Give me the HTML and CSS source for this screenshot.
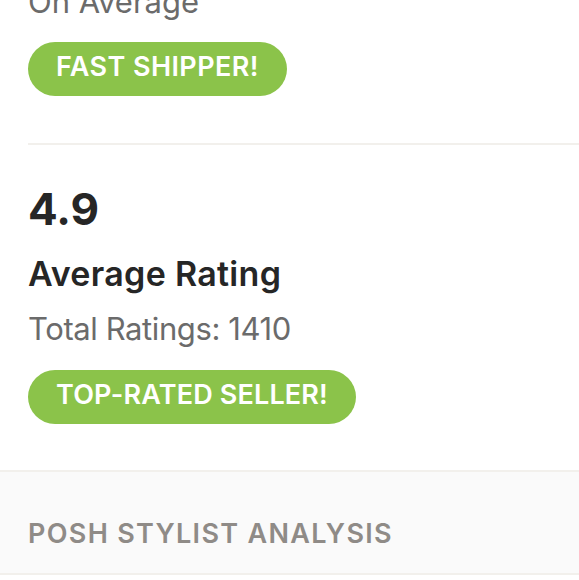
FILE: index.html
```html
<!DOCTYPE html>
<html>
<head>
<meta charset="utf-8">
<link rel="stylesheet" href="styles.css">
</head>
<body>
<div class="stat stat-first">
  <div class="caption caption-avg">On Average</div>
  <div class="badge">FAST SHIPPER!</div>
</div>
<div class="stat stat-second">
  <div class="value">4.9</div>
  <div class="label">Average Rating</div>
  <div class="caption caption-total">Total Ratings: 1410</div>
  <div class="badge badge-top">TOP-RATED SELLER!</div>
</div>
<div class="section-head">
  <div class="section-title">POSH STYLIST ANALYSIS</div>
</div>
</body>
</html>
```

FILE: styles.css
```css
html, body {
  margin: 0;
  padding: 0;
  background: #ffffff;
  overflow: hidden;
}
body {
  font-family: "Inter", "Liberation Sans", sans-serif;
  width: 579px;
  height: 580px;
}
.stat {
  display: flex;
  flex-direction: column;
  align-items: flex-start;
}
.stat-first {
  margin-left: 28px;
  padding-bottom: 47px;
  border-bottom: 2px solid #f2f0ec;
}
.caption {
  font-size: 31px;
  line-height: 38px;
  color: #6b6b6b;
}
.caption-avg {
  margin-top: -17px;
}
.badge {
  height: 54px;
  box-sizing: border-box;
  border-radius: 27px;
  background: #8bc34a;
  color: #ffffff;
  font-weight: 600;
  font-size: 27px;
  letter-spacing: 0.4px;
  padding: 0 28px 5px;
  display: flex;
  align-items: center;
  margin-top: 21px;
}
.stat-second {
  padding: 38px 0 46px 28px;
}
.value {
  font-size: 44px;
  line-height: 52px;
  font-weight: 700;
  color: #262626;
}
.label {
  font-size: 34px;
  line-height: 40px;
  font-weight: 600;
  letter-spacing: 0.3px;
  color: #262626;
  margin-top: 19px;
}
.caption-total {
  font-size: 31px;
  letter-spacing: -0.4px;
  margin-top: 16px;
}
.stat-second .badge-top {
  margin-top: 22px;
  letter-spacing: 0.15px;
}
.section-head {
  background: #fafafa;
  border-top: 2px solid #f2f0ec;
  border-bottom: 2px solid #f2f0ec;
  padding: 45px 28px 22px;
}
.section-title {
  font-size: 27px;
  line-height: 34px;
  font-weight: 600;
  color: #8f8b87;
  letter-spacing: 1.3px;
}
```
